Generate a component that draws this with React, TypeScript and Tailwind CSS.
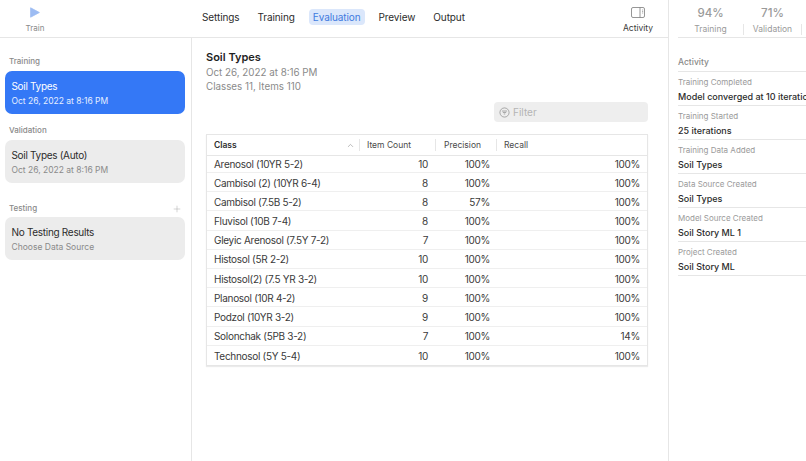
import { ChevronUp, Plus } from "lucide-react";

const rows = [
    ["Arenosol (10YR 5-2)", "10", "100%", "100%"],
    ["Cambisol (2) (10YR 6-4)", "8", "100%", "100%"],
    ["Cambisol (7.5B 5-2)", "8", "57%", "100%"],
    ["Fluvisol (10B 7-4)", "8", "100%", "100%"],
    ["Gleyic Arenosol (7.5Y 7-2)", "7", "100%", "100%"],
    ["Histosol (5R 2-2)", "10", "100%", "100%"],
    ["Histosol(2) (7.5 YR 3-2)", "10", "100%", "100%"],
    ["Planosol (10R 4-2)", "9", "100%", "100%"],
    ["Podzol (10YR 3-2)", "9", "100%", "100%"],
    ["Solonchak (5PB 3-2)", "7", "100%", "14%"],
    ["Technosol (5Y 5-4)", "10", "100%", "100%"],
];

const activity = [
    ["Training Completed", "Model converged at 10 iterations"],
    ["Training Started", "25 iterations"],
    ["Training Data Added", "Soil Types"],
    ["Data Source Created", "Soil Types"],
    ["Model Source Created", "Soil Story ML 1"],
    ["Project Created", "Soil Story ML"],
];

const tabs = ["Settings", "Training", "Evaluation", "Preview", "Output"];

function SourceCard({ title, sub, active }: { title: string; sub: string; active?: boolean }) {
    return (
        <div
            className={`h-[43px] rounded-[7px] px-[6.5px] pt-[8px] ${active ? "bg-[#3478f6] text-white" : "bg-[#ececec] text-[#2c2c2c]"}`}
        >
            <div className="text-[10px] leading-[15px] tracking-[-0.3px]">{title}</div>
            <div className={`text-[8.5px] leading-[14px] ${active ? "text-[#e6efff]" : "text-[#8a8a8a]"}`}>
                {sub}
            </div>
        </div>
    );
}

export default function App() {
    return (
        <div className="flex h-[461px] w-[806px] overflow-hidden bg-white font-['Inter',sans-serif] text-[#2c2c2c]">
            <div className="flex w-[668px] shrink-0 flex-col">
                {/* Toolbar */}
                <div className="flex h-[38px] shrink-0 items-center border-b border-[#e6e6e6]">
                    <div className="flex w-[70px] flex-col items-center pt-[4px]">
                        <svg width="10" height="11" viewBox="0 0 10 11">
                            <path d="M0.6 0.8 L9.4 5.5 L0.6 10.2 Z" fill="#9dbcf3" stroke="#9dbcf3" strokeWidth="0.8" strokeLinejoin="round" />
                        </svg>
                        <span className="mt-[5px] text-[8px] leading-[11px] text-[#8a8a8a]">Train</span>
                    </div>
                    <div className="mb-[4px] ml-[123px] flex items-center">
                        {tabs.map((t) => (
                            <div
                                key={t}
                                className={`rounded-[4px] text-[10px] leading-[16px] tracking-[-0.1px] ${t === "Evaluation" ? "mx-[5px] bg-[#dbe7fb] px-[4px] text-[#3f7be0]" : "mx-[9px] text-[#2c2c2c]"}`}
                            >
                                {t}
                            </div>
                        ))}
                    </div>
                    <div className="ml-auto flex w-[60px] flex-col items-center pt-[4px]">
                        <svg width="14" height="11" viewBox="0 0 14 11" fill="none" stroke="#7c7c7c" strokeWidth="0.8">
                            <rect x="0.5" y="0.5" width="13" height="10" rx="1.5" />
                            <path d="M9 0.5 V10.5" />
                            <path d="M11 3 H12.2 M11 4.5 H12.2 M11 6 H12.2" strokeWidth="0.6" />
                        </svg>
                        <span className="mt-[5px] text-[8.5px] leading-[11px] text-[#3a3a3a]">Activity</span>
                    </div>
                </div>

                <div className="flex min-h-0 flex-1">
                    {/* Sidebar */}
                    <div className="w-[192px] shrink-0 border-r border-[#e6e6e6] pl-[5px] pr-[6px]">
                        <div className="mb-[4px] mt-[18px] px-[4px] text-[8px] font-medium leading-[11px] text-[#8a8a8a]">Training</div>
                        <SourceCard title="Soil Types" sub="Oct 26, 2022 at 8:16 PM" active />
                        <div className="mb-[4px] mt-[11px] px-[4px] text-[8px] font-medium leading-[11px] text-[#8a8a8a]">Validation</div>
                        <SourceCard title="Soil Types (Auto)" sub="Oct 26, 2022 at 8:16 PM" />
                        <div className="mb-[3px] mt-[20px] flex items-center justify-between pl-[4px] pr-[3px] text-[8px] font-medium leading-[11px] text-[#8a8a8a]">
                            <span>Testing</span>
                            <Plus size={10} strokeWidth={1} className="text-[#9a9a9a]" />
                        </div>
                        <SourceCard title="No Testing Results" sub="Choose Data Source" />
                    </div>

                    {/* Evaluation */}
                    <div className="min-w-0 flex-1 pl-[14px] pr-[20px] pt-[12px]">
                        <div className="text-[11px] font-semibold leading-[15px] text-[#1f1f1f]">Soil Types</div>
                        <div className="mt-[1px] text-[9.8px] leading-[14px] text-[#8a8a8a]">Oct 26, 2022 at 8:16 PM</div>
                        <div className="text-[9.8px] leading-[14px] text-[#8a8a8a]">Classes 11, Items 110</div>
                        <div className="mt-[8px] flex justify-end">
                            <div className="flex h-[20px] w-[154px] items-center rounded-[4px] bg-[#eeeeee] pl-[5px] text-[10px] text-[#b4b4b4]">
                                <svg width="11" height="11" viewBox="0 0 12 12" fill="none" stroke="#8f8f8f" strokeWidth="0.8" className="mr-[3px]">
                                    <circle cx="6" cy="6" r="5" />
                                    <path d="M3.2 4.4 H8.8 M4.2 6 H7.8 M5.2 7.6 H6.8" />
                                </svg>
                                Filter
                            </div>
                        </div>
                        <div className="mt-[12px] border border-[#e6e6e6] shadow-[0_1px_1px_rgba(0,0,0,0.08)]">
                            <div className="flex h-[21px] items-center border-b border-[#e6e6e6] text-[8.5px] leading-[12px] text-[#4a4a4a]">
                                <div className="flex w-[153px] items-center justify-between border-r border-[#e6e6e6] pl-[7px] pr-[4px] font-semibold text-[#2c2c2c]">
                                    Class
                                    <ChevronUp size={9} strokeWidth={1.5} className="text-[#8a8a8a]" />
                                </div>
                                <div className="w-[76px] border-r border-[#e6e6e6] pl-[7px]">Item Count</div>
                                <div className="w-[61px] border-r border-[#e6e6e6] pl-[8px]">Precision</div>
                                <div className="pl-[7px]">Recall</div>
                            </div>
                            {rows.map((r, i) => (
                                <div
                                    key={r[0]}
                                    className={`flex items-center border-b border-[#efefef] text-[10px] tracking-[-0.3px] text-[#3a3a3a] last:border-b-0 ${i === 0 ? "h-[17px]" : "h-[19.2px] pt-[2px]"}`}
                                >
                                    <div className="w-[153px] pl-[7px]">{r[0]}</div>
                                    <div className="w-[68px] text-right">{r[1]}</div>
                                    <div className="w-[62px] text-right">{r[2]}</div>
                                    <div className="flex-1 pr-[7px] text-right">{r[3]}</div>
                                </div>
                            ))}
                        </div>
                    </div>
                </div>
            </div>

            {/* Activity panel */}
            <div className="min-w-0 flex-1 overflow-hidden border-l border-[#e6e6e6] pl-[9px]">
                <div className="flex h-[38px] w-[200px] items-start border-b border-[#e6e6e6] pt-[6px]">
                    <div className="w-[65px] text-center">
                        <div className="text-[11.5px] font-medium leading-[15px] text-[#9a9a9a]">94%</div>
                        <div className="mt-[3px] text-[8.5px] leading-[11px] text-[#9a9a9a]">Training</div>
                    </div>
                    <div className="w-[59px] text-center">
                        <div className="text-[11.5px] font-medium leading-[15px] text-[#9a9a9a]">71%</div>
                        <div className="mt-[3px] border-x border-[#e6e6e6] text-[8.5px] leading-[11px] text-[#9a9a9a]">Validation</div>
                    </div>
                </div>
                <div className="mt-[19px] w-[200px] border-b border-[#e6e6e6] pb-[3px] text-[8.5px] font-medium leading-[11px] text-[#8a8a8a]">Activity</div>
                {activity.map(([k, v]) => (
                    <div key={k} className="h-[34px] w-[200px] whitespace-nowrap border-b border-[#e6e6e6] pt-[4px]">
                        <div className="text-[8px] leading-[12px] text-[#9a9a9a]">{k}</div>
                        <div className="mt-[2px] text-[9px] font-medium leading-[14px] text-[#2c2c2c]">{v}</div>
                    </div>
                ))}
            </div>
        </div>
    );
}
